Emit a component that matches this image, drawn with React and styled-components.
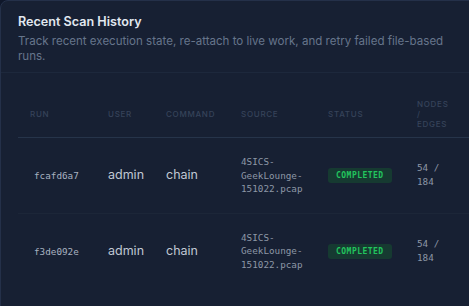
import React from "react";
import styled, { createGlobalStyle } from "styled-components";

const GlobalStyle = createGlobalStyle`
  html, body {
    margin: 0;
    padding: 0;
    background: #0f172a;
    overflow: hidden;
  }
  body {
    font-family: Inter, "Noto Sans", sans-serif;
    -webkit-font-smoothing: antialiased;
  }
`;

const Card = styled.section`
  box-sizing: border-box;
  width: 560px;
  min-height: 330px;
  background: #172033;
  border: 1px solid #243049;
  border-radius: 8px;
`;

const Header = styled.header`
  padding: 12px 17px 12px;
  border-bottom: 1px solid #1d283c;
  height: 72px;
  box-sizing: border-box;
`;

const Title = styled.h2`
  margin: 0;
  font-size: 12.6px;
  line-height: 18px;
  font-weight: 600;
  color: #e2e8f0;
`;

const Subtitle = styled.p`
  margin: 3px 0 0;
  font-size: 11.55px;
  line-height: 14.5px;
  color: #66758b;
  max-width: 440px;
`;

const TableWrap = styled.div`
  padding: 18px 0 0 17px;
`;

const Table = styled.table`
  border-collapse: collapse;
  table-layout: fixed;
  width: 520px;
`;

const Th = styled.th`
  text-align: left;
  vertical-align: middle;
  padding: 8px 12px;
  font-size: 8px;
  line-height: 10px;
  font-weight: 500;
  letter-spacing: 0.09em;
  text-transform: uppercase;
  color: #36435a;
  border-bottom: 1px solid #26344a;
`;

const Tr = styled.tr`
  & + & td {
    border-top: 1px solid #1c2638;
  }
`;

const Td = styled.td`
  vertical-align: middle;
  padding: 17px 12px;
  font-size: 12.5px;
  line-height: 14px;
  color: #c0c8d4;
`;

const Mono = styled.span`
  font-family: "DejaVu Sans Mono", "Liberation Mono", monospace;
  font-size: 9.3px;
  line-height: ${(p) => p.$lh || "13.5px"};
  color: ${(p) => p.$color || "#8d97a6"};
  padding-left: ${(p) => p.$pad || "0"};
  display: inline-block;
  word-break: break-word;
`;

const Badge = styled.span`
  display: inline-block;
  padding: 0 8px;
  height: 15px;
  line-height: 15px;
  border-radius: 3px;
  background: #163a31;
  color: #22c55e;
  font-family: "DejaVu Sans Mono", "Liberation Mono", monospace;
  font-size: 8px;
  font-weight: 700;
  letter-spacing: 0.06em;
`;

const runs = [
  { id: "fcafd6a7", user: "admin", command: "chain", status: "COMPLETED", stats: "54 / 184" },
  { id: "f3de092e", user: "admin", command: "chain", status: "COMPLETED", stats: "54 / 184" },
];

export default function App() {
  return (
    <>
      <GlobalStyle />
      <Card>
        <Header>
          <Title>Recent Scan History</Title>
          <Subtitle>
            Track recent execution state, re-attach to live work, and retry failed file-based runs.
          </Subtitle>
        </Header>
        <TableWrap>
          <Table>
            <colgroup>
              <col style={{ width: 78 }} />
              <col style={{ width: 58 }} />
              <col style={{ width: 75 }} />
              <col style={{ width: 87 }} />
              <col style={{ width: 89 }} />
              <col style={{ width: 58 }} />
              <col style={{ width: 75 }} />
            </colgroup>
            <thead>
              <tr>
                <Th>Run</Th>
                <Th>User</Th>
                <Th>Command</Th>
                <Th>Source</Th>
                <Th>Status</Th>
                <Th>Nodes / Edges</Th>
                <Th></Th>
              </tr>
            </thead>
            <tbody>
              {runs.map((r) => (
                <Tr key={r.id}>
                  <Td>
                    <Mono $color="#a8b2c0" $pad="4px">{r.id}</Mono>
                  </Td>
                  <Td>{r.user}</Td>
                  <Td>{r.command}</Td>
                  <Td>
                    <Mono>
                      4SICS-
                      <br />
                      GeekLounge-
                      <br />
                      151022.pcap
                    </Mono>
                  </Td>
                  <Td>
                    <Badge>{r.status}</Badge>
                  </Td>
                  <Td>
                    <Mono $lh="14px">{r.stats}</Mono>
                  </Td>
                  <Td></Td>
                </Tr>
              ))}
            </tbody>
          </Table>
        </TableWrap>
      </Card>
    </>
  );
}
